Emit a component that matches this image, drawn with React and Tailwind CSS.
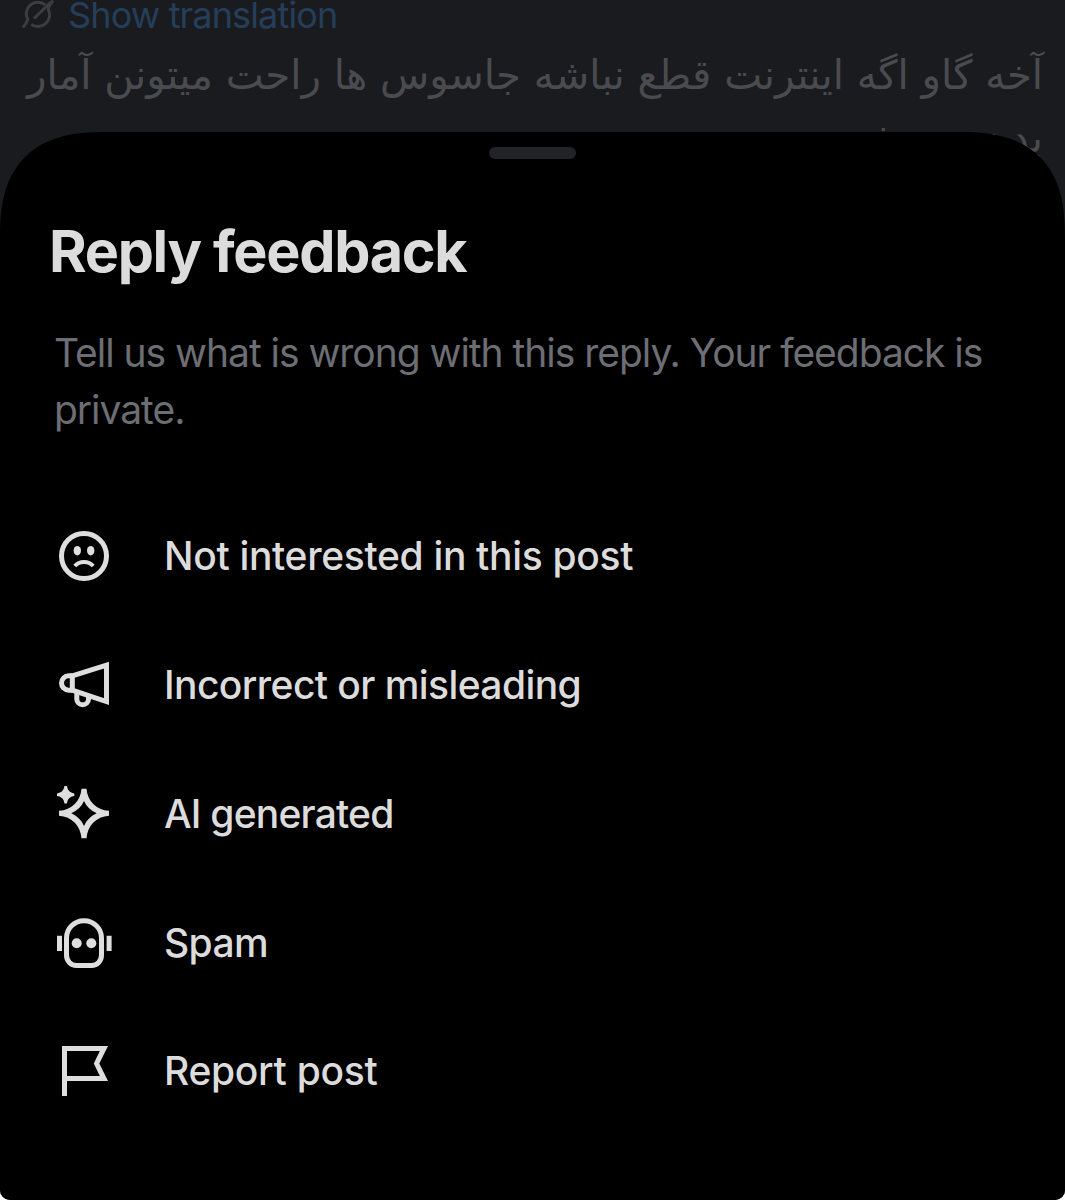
const INK = "#dedede";

function Frown() {
  return (
    <>
      <circle cx="30" cy="30" r="22.5" fill="none" stroke={INK} strokeWidth="5" />
      <ellipse cx="23.3" cy="24.7" rx="3.7" ry="4.8" fill={INK} />
      <ellipse cx="36.7" cy="24.7" rx="3.7" ry="4.8" fill={INK} />
      <path d="M20.7 40C25.5 34.6 34.5 34.6 39.3 40" fill="none" stroke={INK} strokeWidth="4" />
    </>
  );
}

function Megaphone() {
  return (
    <g fill="none" stroke={INK} strokeWidth="5">
      <path d="M18.3 20.9L52.5 10.2V46.6L18.3 35.2Z" />
      <path d="M18.3 20.8H14.7a7.2 7.2 0 0 0 0 14.4H18.3" />
      <path d="M22.8 37v6.9a5.85 5.85 0 0 0 11.7 0V41" />
    </g>
  );
}

function Sparkle() {
  return (
    <g fill={INK}>
      <path
        fillRule="evenodd"
        d="M27.5 4.7H32.5C33.5 17 42.3 25.9 55 26.8V31.8C42.3 32.7 33.5 41.6 32.5 54.3H27.5C26.5 41.6 17.7 32.7 5 31.8V26.8C17.7 25.9 26.5 17 27.5 4.7ZM30 17C27.5 22.5 23.2 26.8 17.3 29.3C23.2 31.8 27.5 36.3 30 41.9C32.5 36.3 36.8 31.8 42.7 29.3C36.8 26.8 32.5 22.5 30 17Z"
      />
      <path d="M10.4 2H13C13.4 6.2 16.1 8.9 20.3 9.4V12C16.1 12.5 13.4 15.2 13 19.4H10.4C10 15.2 7.3 12.5 3 12V9.4C7.3 8.9 10 6.2 10.4 2Z" />
    </g>
  );
}

function Robot() {
  return (
    <>
      <path
        d="M30 7.8C39.7 7.8 47.5 15.4 47.5 25V42C47.5 48 43.2 52.5 37.5 52.5H22.5C16.8 52.5 12.5 48 12.5 42V25C12.5 15.4 20.3 7.8 30 7.8Z"
        fill="none"
        stroke={INK}
        strokeWidth="5"
      />
      <circle cx="22.7" cy="30.3" r="5" fill={INK} />
      <circle cx="37.3" cy="30.3" r="5" fill={INK} />
      <path d="M3 22.7H8V38H3ZM52.6 22.7H57.6V38H52.6Z" fill={INK} />
    </>
  );
}

function Flag() {
  return (
    <path
      fill={INK}
      fillRule="evenodd"
      d="M8 5H54L45.3 22.4L54 40H13V55H8ZM13 10V35H45.8L39.8 22.4L45.8 10Z"
    />
  );
}

const options = [
  { label: "Not interested in this post", Icon: Frown, tracking: "tracking-[-0.33px]" },
  { label: "Incorrect or misleading", Icon: Megaphone, tracking: "tracking-[-0.58px]" },
  { label: "AI generated", Icon: Sparkle, tracking: "tracking-[-0.8px]" },
  { label: "Spam", Icon: Robot, tracking: "tracking-[-0.6px]" },
  { label: "Report post", Icon: Flag, tracking: "tracking-[-0.3px]" },
];

export default function App() {
  return (
    <div className="h-[1200px] w-[1065px] bg-white font-['Inter',sans-serif]">
      <div className="relative h-full overflow-hidden rounded-b-[10px] bg-[#1a1b1f]">
        <div className="h-[132px]">
          <div className="flex h-[30px] items-center pl-[22px]">
            <svg width="32" height="32" viewBox="0 0 32 32" fill="none" stroke="#3c3d40" strokeWidth="3">
              <path d="M23.2 5.8A11.6 11.6 0 0 0 5.8 20.5Q4.5 24.5 0.8 28.4M9.2 25.4A11.6 11.6 0 0 0 26.2 10.5Q27.4 5.5 31 1.5M12 19.5L29 3" />
            </svg>
            <span className="ml-[14px] whitespace-nowrap text-[36px] leading-[30px] tracking-[-0.85px] text-[#253e5a]">
              Show translation
            </span>
          </div>
          <p
            dir="rtl"
            className="mt-[14px] whitespace-nowrap pr-[22px] font-['DejaVu_Sans',sans-serif] text-[40.3px] leading-[63px] text-[#4a4b4e]"
          >
            آخه گاو اگه اینترنت قطع نباشه جاسوس ها راحت میتونن آمار
            <br />
            بدن و بهش
          </p>
        </div>

        <section className="relative h-[1068px] overflow-hidden rounded-t-[88px] bg-black [corner-shape:superellipse(1.36)] supports-[corner-shape:squircle]:rounded-t-[106px]">
          <div className="mx-auto mt-[15px] h-3 w-[87px] rounded-full bg-[#222327]" />
          <h1 className="ml-[49px] mt-[57px] whitespace-nowrap text-[57.5px] font-bold leading-[70px] tracking-[-1.32px] text-[#dcdcdc]">
            Reply feedback
          </h1>
          <p className="ml-[54px] mt-[38px] whitespace-nowrap text-[39px] leading-[57px] tracking-[-1.03px] text-[#6d6e73]">
            Tell us what is wrong with this reply. Your feedback is
            <br />
            private.
          </p>
          <ul className="mt-[54px]">
            {options.map(({ label, Icon, tracking }) => (
              <li key={label} className="flex h-[128.75px] items-center pl-[54px]">
                <svg width="60" height="60" viewBox="0 0 60 60">
                  <Icon />
                </svg>
                <span
                  className={`ml-[50px] whitespace-nowrap text-[39px] font-medium leading-[52px] text-[#dcdcdc] ${tracking}`}
                >
                  {label}
                </span>
              </li>
            ))}
          </ul>
        </section>
      </div>
    </div>
  );
}
